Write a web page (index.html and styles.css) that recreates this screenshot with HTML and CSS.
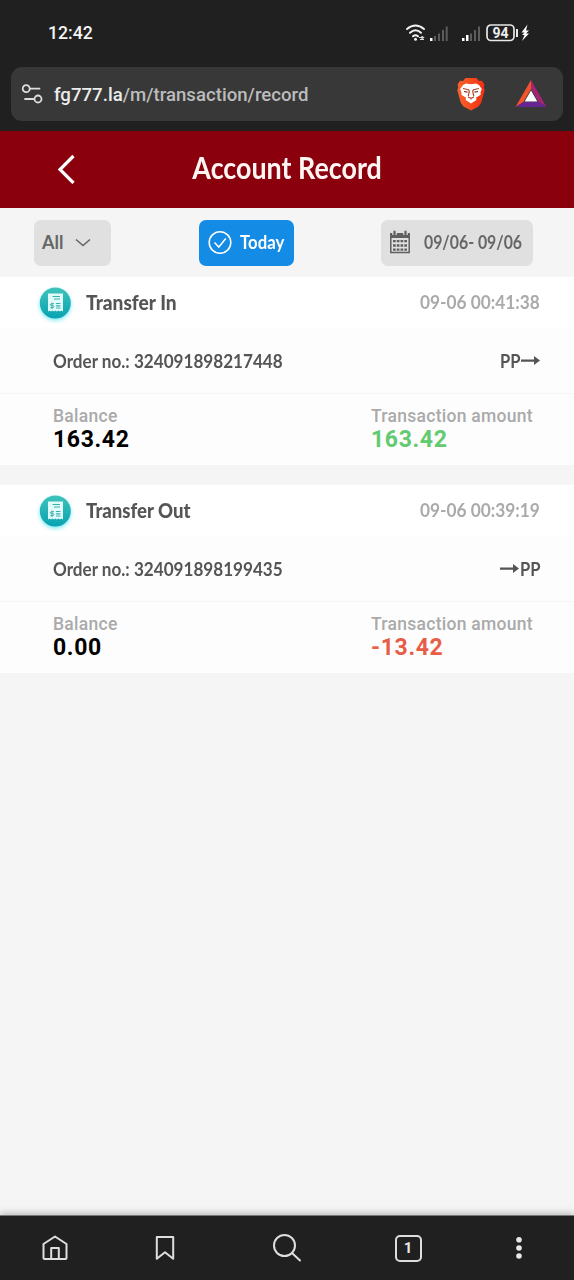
FILE: index.html
```
<!DOCTYPE html>
<html lang="en">
<head>
<meta charset="utf-8">
<title>Account Record</title>
<link rel="stylesheet" href="styles.css">
</head>
<body>
<div class="screen">
  <div class="chrome">
    <div class="status">
      <span class="clock">12:42</span>
      <svg class="indicators" width="140" height="26" viewBox="0 0 140 26">
        <g fill="none" stroke="#f2f2f2" stroke-width="2" stroke-linecap="round">
          <path d="M-1.500 9q8.500-7 17 0M1.500 12.800q5.500-5 11 0M4.500 16.300q2.500-2 5 0" transform="translate(8.500)"/>
        </g>
        <circle cx="15.500" cy="19.300" r="1.500" fill="#f2f2f2"/>
        <path d="M19 17.500h5M21.500 16.300l2 1.200-2 1.200M24 19.500h-4" stroke="#ddd" stroke-width="1.200" fill="none"/>
        <g fill="#5c5c5c">
          <path d="M34 16h2v5h-2zM38 13.500h2v7.500h-2zM42 10h2v11h-2zM45.700 6.500h2V21h-2z"/>
          <path d="M70 13.500h2v7.500h-2zM74 10h2v11h-2zM78 6.500h2V21h-2z"/>
        </g>
        <path d="M30 18h2.500v3H30zM62 18h2.500v3H62zM66 15h2.500v6H66z" fill="#fff"/>
        <rect x="87" y="5" width="27" height="15.500" rx="4" fill="none" stroke="#e8e8e8" stroke-width="1.700"/>
        <text x="100.500" y="17.700" text-anchor="middle" class="battery">94</text>
        <path d="M117 9v8" stroke="#e8e8e8" stroke-width="2"/>
        <path d="M127.500 4.500l-6 8h3l-2.500 2.500h2.500L122 21l7-7.500h-3l3-3h-3z" fill="#fff"/>
      </svg>
    </div>
    <div class="address">
      <svg class="tune" width="22" height="22" viewBox="0 0 22 22" fill="none" stroke="#dedede" stroke-width="1.800" stroke-linecap="round">
        <circle cx="5.200" cy="5.700" r="3.500"/><path d="M9.500 5.700h9M4 16h8.500"/><circle cx="17" cy="16" r="3.500"/>
      </svg>
      <span class="url"><b>fg777.la</b>/m/transaction/record</span>
      <svg class="lion" width="30" height="34" viewBox="0 0 30 34">
        <defs><linearGradient id="fur"><stop offset="0" stop-color="#fa6429"/><stop offset="1" stop-color="#f22f12"/></linearGradient></defs>
        <path d="M9.500 1h11l2.500 3 3-.2 2.500 4-.8 2.500 1 3-3.500 12.500-2.700 3.700-7.500 4-7.500-4-2.700-3.700L1.300 13.300l1-3-.8-2.500 2.500-4 3 .2z" fill="url(#fur)"/>
        <path d="M10 6.500l5 .8 5-.8 3 1.500 2.800 4-1.300 3.500.2 2.300-4.700 3 .4 2.200-5.400 3.500-5.400-3.500.4-2.200-4.700-3 .2-2.300L4.200 12 7 8z" fill="#fff"/>
        <path d="M7 11.500l5.500 1.200.8 1.500-1 5M23 11.500l-5.500 1.200-.8 1.500 1 5M12 20l3 1.300 3-1.300M15 20.500v2" fill="none" stroke="#b5452a" stroke-width="1.200"/>
        <path d="M8 14.500l3.500.7M22 14.500l-3.500.7" stroke="#7b281a" stroke-width="1.200"/>
      </svg>
      <svg class="bat" width="34" height="30" viewBox="0 0 34 30">
        <path d="M17 1L1.500 28l8-5L17 10z" fill="#f2542d"/>
        <path d="M17 1l15.500 27-8-5L17 10z" fill="#a32374"/>
        <path d="M1.500 28h31l-8-5h-15z" fill="#672493"/>
        <path d="M17 11.500L23.300 22.500H10.700z" fill="#fff"/>
      </svg>
    </div>
  </div>

  <header class="header">
    <svg class="back" width="20" height="30" viewBox="0 0 20 30" fill="none" stroke="#fff" stroke-width="3.200"><path d="M17.500 2L4 15.500 17.500 29"/></svg>
    <h1 class="title"><span>Account Record</span></h1>
  </header>

  <div class="filters">
    <button class="pill pill-all"><span>All</span>
      <svg width="16" height="10" viewBox="0 0 16 10" fill="none" stroke="#666" stroke-width="1.600"><path d="M1 2.500l7 6 7-6"/></svg>
    </button>
    <button class="pill pill-today">
      <svg width="24" height="24" viewBox="0 0 24 24" fill="none" stroke="#fff" stroke-width="1.500"><circle cx="12" cy="12.500" r="10.800"/><path d="M6.500 12.500l4.300 4.500 7-8.500"/></svg>
      <span class="fit today">Today</span>
    </button>
    <button class="pill pill-date">
      <svg width="22" height="24" viewBox="0 0 22 24" fill="#606060">
        <path d="M1 3h20v5H1z"/><path d="M1.800 7v15.500h18.400V7" fill="none" stroke="#606060" stroke-width="1.500"/>
        <path d="M5.500 1v4M16.500 1v4" stroke="#e0e0e0" stroke-width="4.500"/>
        <path d="M5.500 1.500v3M16.500 1.500v3" stroke="#606060" stroke-width="2.200" stroke-linecap="round"/>
        <path d="M4 11.200h14M4 15.500h14M4 19.700h14" stroke="#606060" stroke-width="2.300" stroke-dasharray="2.700 1.060"/>
      </svg>
      <span class="fit range">09/06- 09/06</span>
    </button>
  </div>

  <main class="records">
    <article class="card">
      <div class="card-head">
        <svg class="receipt" width="42" height="42" viewBox="0 0 42 42">
          <defs><linearGradient id="teal" x2="0" y2="1"><stop offset="0" stop-color="#3fc3ba"/><stop offset="1" stop-color="#08a2b2"/></linearGradient></defs>
          <circle class="glow" cx="21.300" cy="21" r="15.500" fill="url(#teal)"/>
          <path d="M14 11.500h15v18l-1.500-1-1.500 1-1.500-1-1.500 1-1.500-1-1.500 1-1.500-1-1.500 1-1.500-1-1.500 1z" fill="#e2fcfa"/>
          <path d="M18.500 14.500h7.500M20 17h6M22 21.500h4.500M22 23.800h4.500M22 26h4.500" stroke="#3aafb2" stroke-width="1.200"/>
          <path d="M20 21.700h-1.700q-2 0-2 1t2 1 1.700 1-1.700 1h-2M18 20.500v6.500" fill="none" stroke="#3aafb2"/>
        </svg>
        <h2 class="kind"><span class="fit kind-in">Transfer In</span></h2>
        <time class="fit stamp">09-06 00:41:38</time>
      </div>
      <div class="order"><span class="fit number">Order no.: 324091898217448</span>
        <span class="route"><span class="fit pp-right">PP</span><svg width="19" height="12" viewBox="0 0 19 12"><path d="M0 5.500h13V2L19 6.500 13 11V7.800H0z" fill="#555"/></svg></span>
      </div>
      <div class="amounts">
        <div class="balance"><div class="label">Balance</div><div class="value">163.42</div></div>
        <div class="amount"><div class="label">Transaction amount</div><div class="value plus">163.42</div></div>
      </div>
    </article>

    <article class="card">
      <div class="card-head">
        <svg class="receipt" width="42" height="42" viewBox="0 0 42 42">
          <circle class="glow" cx="21.300" cy="21" r="15.500" fill="url(#teal)"/>
          <path d="M14 11.500h15v18l-1.500-1-1.500 1-1.500-1-1.500 1-1.500-1-1.500 1-1.500-1-1.500 1-1.500-1-1.500 1z" fill="#e2fcfa"/>
          <path d="M18.500 14.500h7.500M20 17h6M22 21.500h4.500M22 23.800h4.500M22 26h4.500" stroke="#3aafb2" stroke-width="1.200"/>
          <path d="M20 21.700h-1.700q-2 0-2 1t2 1 1.700 1-1.700 1h-2M18 20.500v6.500" fill="none" stroke="#3aafb2"/>
        </svg>
        <h2 class="kind"><span class="fit kind-out">Transfer Out</span></h2>
        <time class="fit stamp">09-06 00:39:19</time>
      </div>
      <div class="order"><span class="fit number">Order no.: 324091898199435</span>
        <span class="route"><svg width="19" height="12" viewBox="0 0 19 12"><path d="M0 5.500h13V2L19 6.500 13 11V7.800H0z" fill="#555"/></svg><span class="fit pp-left">PP</span></span>
      </div>
      <div class="amounts">
        <div class="balance"><div class="label">Balance</div><div class="value">0.00</div></div>
        <div class="amount"><div class="label">Transaction amount</div><div class="value minus">-13.42</div></div>
      </div>
    </article>
  </main>

  <nav class="toolbar">
    <svg width="28" height="28" viewBox="0 0 28 28"><path d="M2.500 10L14 2.500l11.500 7.500v14q0 1-1 1h-21q-1 0-1-1zM10.200 24.500V14h7.600v10.500"/></svg>
    <svg width="28" height="28" viewBox="0 0 28 28"><path d="M5.800 3h16.400v21.800L14 18.300l-8.200 6.500z"/></svg>
    <svg width="30" height="30" viewBox="0 0 30 30"><circle cx="12.500" cy="12.500" r="10.500"/><path d="M20 20l8 7.500"/></svg>
    <span class="tabs">1</span>
    <svg class="more" width="10" height="28" viewBox="0 0 10 28"><circle cx="5" cy="5.800" r="2.800"/><circle cx="5" cy="14" r="2.800"/><circle cx="5" cy="22" r="2.800"/></svg>
  </nav>
</div>
</body>
</html>
```
FILE: styles.css
```
* { box-sizing: border-box; }
body { margin: 0; font-family: Lato, "Liberation Sans", sans-serif; }
h1, h2 { margin: 0; font-size: inherit; }
svg { display: block; flex: none; }
.screen { width: 574px; height: 1280px; display: flex; flex-direction: column; background: #f5f5f5; white-space: nowrap; overflow: hidden; }
.chrome { height: 131px; background: #202020; font-family: Roboto, sans-serif; }
.status { height: 67px; padding: 0 34px 2px 48px; display: flex; align-items: center; justify-content: space-between; }
.clock { font-size: 17.700px; font-weight: 500; color: #f3f3f3; }
.battery { font: 700 14px Roboto, sans-serif; fill: #eee; }
.address { height: 54px; margin: 0 11px; padding: 0 15px 0 10px; border-radius: 11px; background: #383838; display: flex; align-items: center; }
.url { margin-left: 11px; padding-top: 1px; flex: 1; font-size: 18.600px; font-weight: 500; color: #bcbcbc; letter-spacing: .02px; }
.url b { font-weight: 500; color: #ececec; }
.lion { margin-right: 28px; }

.header { height: 77px; padding: 0 56px 2px; background: #8a000d; color: #fff5f3; display: grid; grid-template-columns: 20px 1fr 20px; align-items: center; }
.title { font-size: 29.500px; font-weight: 700; line-height: 36px; text-align: center; padding: 0 0 1px 1px; }
.title span { display: inline-block; transform: scaleX(.91); }

.filters { height: 69px; padding: 0 41px 0 34px; display: flex; align-items: center; justify-content: space-between; }
.pill { height: 46px; border: 0; border-radius: 7px; background: #e0e0e0; color: #666; font: 700 18px Lato, sans-serif; display: flex; align-items: center; padding: 0 0 1px; }
.pill-all { width: 77px; padding-left: 8px; gap: 12px; }
.pill-today { width: 95px; padding-left: 9px; gap: 8px; background: #148be5; color: #fff; }
.pill-date { width: 152px; padding-left: 8px; gap: 13px; }

.records { display: grid; gap: 20px; }
.card { height: 188px; background: #fdfdfd; color: #555; }
.card-head { height: 52px; padding: 0 34px; background: #fff; display: flex; align-items: center; }
.glow { filter: drop-shadow(0 2px 2px #83e9f3); }
.kind { margin-left: 10px; flex: 1; font-size: 21px; font-weight: 900; padding-bottom: 4px; }
.fit { display: inline-block; transform-origin: left; }
.today { transform: scaleX(.93); }
.range { transform: scaleX(.88); }
.kind-in { transform: scaleX(.91); }
.kind-out { transform: scaleX(.885); }
.stamp { font-size: 18px; font-weight: 700; color: #aaa; transform: scaleX(.96); transform-origin: right; padding-bottom: 2px; }
.order { height: 64px; padding: 0 34px 2px 53px; display: flex; align-items: center; justify-content: space-between; font-size: 19px; font-weight: 700; }
.number { transform: scaleX(.9); }
.route { display: flex; align-items: center; }
.pp-right, .pp-left { transform: scaleX(.87); transform-origin: right; }
.pp-left { margin: 0 -1px 0 -2px; }
.amounts { height: 72px; border-top: 1px solid #f5f5f5; padding: 11px 0 0 53px; display: grid; grid-template-columns: 318px 1fr; font-family: Roboto, sans-serif; }
.label { font-size: 17.500px; line-height: 22px; font-weight: 500; color: #aaa; letter-spacing: .28px; }
.value { font-size: 23px; line-height: 24px; padding-top: 1px; font-weight: 700; letter-spacing: .65px; color: #000; }
.plus { color: #62ca71; }
.minus { color: #e85d46; }

.toolbar { height: 65px; margin-top: auto; background: #202020; border-top: 1px solid #777; box-shadow: 0 -2px 7px #bbb; display: grid; grid-template-columns: 109px 112px 132px 110px 111px; place-items: center; fill: none; stroke: #dedede; stroke-width: 2; stroke-linejoin: round; stroke-linecap: round; }
.tabs { width: 27px; height: 27px; border: 2px solid #dedede; border-radius: 5px; color: #e8e8e8; font: 700 15px/23px Roboto, sans-serif; text-align: center; }
.more { fill: #e8e8e8; stroke: none; }
```
